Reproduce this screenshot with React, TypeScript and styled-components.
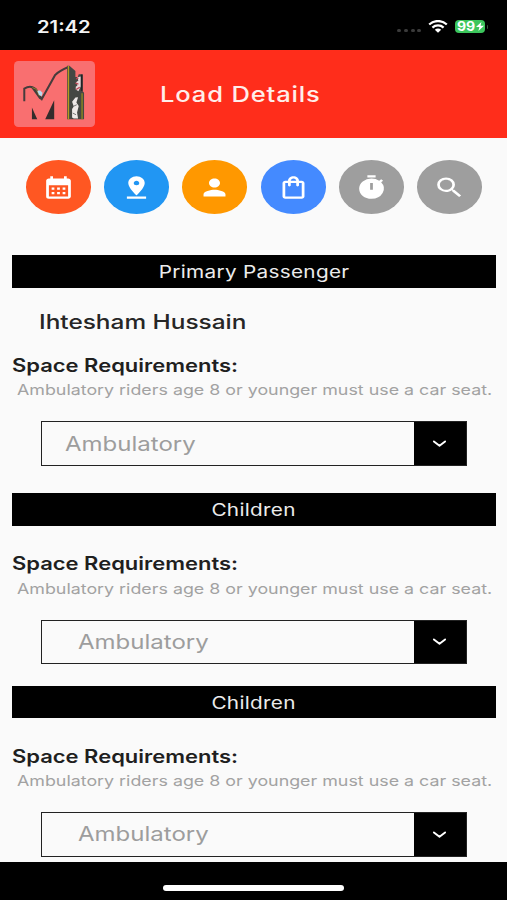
import React from 'react';
import styled, { createGlobalStyle } from 'styled-components';
import {
  MdCalendarMonth,
  MdPinDrop,
  MdPerson,
  MdOutlineShoppingBag,
  MdTimer,
  MdSearch,
} from 'react-icons/md';

const GlobalStyle = createGlobalStyle`
  * { box-sizing: border-box; }
  body { margin: 0; background: #000; font-family: Inter, "Liberation Sans", sans-serif; }
`;

const Screen = styled.div`
  width: 507px;
  height: 900px;
  display: flex;
  flex-direction: column;
  overflow: hidden;
  background: #fafafa;
`;

const Wide = styled.span<{ $scale?: number; $origin?: string }>`
  display: inline-block;
  white-space: nowrap;
  transform: scaleX(${(p) => p.$scale ?? 1.22});
  transform-origin: ${(p) => p.$origin ?? 'left'} center;
`;

const StatusBar = styled.div`
  flex: none;
  height: 50px;
  padding: 0 19px 0 37px;
  display: flex;
  justify-content: space-between;
  align-items: flex-start;
  background: #000;
  color: #f4f4f4;
`;

const Clock = styled.div`
  font-size: 17px;
  font-weight: 600;
  line-height: 22px;
  padding-top: 15.5px;
`;

const StatusIcons = styled.div`
  display: flex;
  align-items: center;
  height: 13px;
  margin-top: 20px;
`;

const Dots = styled.div`
  display: flex;
  gap: 2.6px;
  margin-right: 7px;
  padding-top: 8px;
`;

const Dot = styled.i`
  width: 4px;
  height: 3px;
  border-radius: 1.5px;
  background: #3b3b3b;
`;

const Battery = styled.div`
  width: 30px;
  height: 13.4px;
  margin-left: 7px;
  padding-left: 2px;
  border-radius: 4px;
  background: #3cc65c;
  color: #fff;
  display: flex;
  align-items: center;
  font-size: 12.5px;
  font-weight: 700;
  line-height: 13px;
`;

const BatteryValue = styled.span`
  width: 19px;
  padding-top: 0.4px;
`;

const Nub = styled.i`
  width: 1.5px;
  height: 4px;
  margin-left: 1.3px;
  border-radius: 0 2px 2px 0;
  background: #35553c;
`;

const Header = styled.header`
  flex: none;
  height: 88px;
  padding: 0 14px;
  display: grid;
  grid-template-columns: 81px 1fr 81px;
  align-items: center;
  background: #ff2d1b;
`;

const Logo = styled.svg`
  display: block;
  width: 81px;
  height: 66px;
`;

const Title = styled.h1`
  margin: 0;
  padding: 1px 0 0 65px;
  color: #ffeeea;
  font-size: 21px;
  font-weight: 500;
  line-height: 26px;
  letter-spacing: 0.7px;
`;

const Steps = styled.nav`
  flex: none;
  height: 117px;
  padding: 22.4px 25px 0 26px;
  display: flex;
  justify-content: space-between;
`;

const Step = styled.button<{ $color: string }>`
  width: 65px;
  height: 53.4px;
  padding: 0;
  border: 0;
  border-radius: 50%;
  display: grid;
  place-items: center;
  background: ${(p) => p.$color};
  color: #fff;

  svg {
    width: 27px;
    height: 27px;
    transform: scaleX(1.22);
  }
`;

const Section = styled.section<{ $gap: number }>`
  flex: none;
  padding: 0 11px 0 12px;
  margin-bottom: ${(p) => p.$gap}px;
`;

const Bar = styled.h2`
  height: 32.6px;
  margin: 0;
  padding-top: 1.5px;
  display: grid;
  place-items: center;
  background: #000;
  color: #ececec;
  font-size: 17px;
  font-weight: 400;
  letter-spacing: 0.24px;
`;

const Name = styled.div`
  margin-top: 21px;
  padding-left: 27px;
  height: 26px;
  color: #262626;
  font-size: 20px;
  font-weight: 500;
  line-height: 26px;
`;

const Label = styled.div<{ $top: number }>`
  margin-top: ${(p) => p.$top}px;
  height: 22px;
  color: #1f1f1f;
  font-size: 18px;
  font-weight: 600;
  line-height: 22px;
`;

const Hint = styled.div`
  margin-top: 3.2px;
  padding-left: 4.8px;
  height: 20px;
  color: #a2a2a2;
  font-size: 14.5px;
  line-height: 20px;
`;

const Select = styled.div<{ $indent: number }>`
  margin: 21.1px 29.5px 0 29px;
  height: 44.5px;
  display: flex;
  align-items: center;
  justify-content: space-between;
  padding-left: ${(p) => p.$indent}px;
  border: 1.4px solid #222;
  color: #9d9d9d;
  font-size: 20px;
  line-height: 26px;
`;

const Arrow = styled.span`
  align-self: stretch;
  width: 52px;
  display: grid;
  place-items: center;
  background: #000;
`;

const Main = styled.main`
  flex: none;
  height: 607.3px;
  overflow: hidden;
`;

const HomeBar = styled.footer`
  flex: 1;
  display: flex;
  justify-content: center;
  padding-top: 23px;
  background: #000;
`;

const HomeIndicator = styled.i`
  width: 181px;
  height: 6px;
  border-radius: 3px;
  background: #fff;
`;

const steps = [
  { color: '#ff5722', Icon: MdCalendarMonth },
  { color: '#2196f3', Icon: MdPinDrop },
  { color: '#ff9800', Icon: MdPerson },
  { color: '#448aff', Icon: MdOutlineShoppingBag },
  { color: '#9e9e9e', Icon: MdTimer },
  { color: '#9e9e9e', Icon: MdSearch },
];

const passengers = [
  { title: 'Primary Passenger', name: 'Ihtesham Hussain', labelTop: 20.6, indent: 22.5, gap: 27.1 },
  { title: 'Children', labelTop: 27.8, indent: 36, gap: 21.4 },
  { title: 'Children', labelTop: 27.6, indent: 36, gap: 0 },
];

function BrandLogo() {
  return (
    <Logo viewBox="13 14 244 199" preserveAspectRatio="none">
      <rect x="13" y="14" width="244" height="199" rx="13" fill="#f96f70" />
      <path
        d="M44 135V97Q62 86 76 97L97 128L137 56Q150 43 177 32"
        fill="none"
        stroke="#463c3c"
        strokeWidth="6"
      />
      <path d="M62 90L82 98L98 134L88 126Z" fill="#423e3b" />
      <path d="M68 94L80 99L90 120" fill="none" stroke="#9b8b29" strokeWidth="2.5" />
      <path d="M83 104L92 103L99 110L96 121L88 116Z" fill="#b9dcef" />
      <path d="M67 190V154L83 190Z" fill="#342c2c" />
      <path d="M107 190L134 132V190Z" fill="#342c2c" />
      <path d="M173 28L180 28L198 44V62H205L208 54H220V105L224 110V190H173Z" fill="#454744" />
      <path d="M177 29V190" stroke="#b39d1c" strokeWidth="4" />
      <path d="M218 111V190" stroke="#8f8b1f" strokeWidth="4" />
      <path
        d="M188 184V159L193 151L188 137L198 124L206 123L201 139L208 150L203 169L206 187H193Z"
        fill="#eee9e8"
      />
      <path
        d="M199 100V92L204 88L200 78L207 73L203 63L214 61V91L207 105Z"
        fill="#ead9dc"
      />
      <path d="M200 68L207 65M198 81L207 84M200 100L211 93" stroke="#bc4355" strokeWidth="4" />
      <path d="M217 55V104" stroke="#202326" strokeWidth="5" />
      <path d="M191 151L202 146M190 171L200 176" stroke="#777" strokeWidth="3" />
    </Logo>
  );
}

function Wifi() {
  return (
    <svg width="20" height="13" viewBox="0 0 20 13" fill="none">
      <path d="M1.2 4.5C6.1-.1 13.9-.1 18.8 4.5" stroke="#fff" strokeWidth="2.3" />
      <path d="M4.4 7.6C7.5 4.7 12.5 4.7 15.6 7.6" stroke="#fff" strokeWidth="2.2" />
      <path d="M6.8 9.8C8.6 8.2 11.4 8.2 13.2 9.8L10 12.8Z" fill="#fff" />
    </svg>
  );
}

function Chevron() {
  return (
    <svg width="15" height="9" viewBox="0 0 15 9" fill="none">
      <path
        d="M1.9 2.4L7.5 6.8L13.1 2.4"
        stroke="#fff"
        strokeWidth="1.9"
        strokeLinecap="round"
        strokeLinejoin="round"
      />
    </svg>
  );
}

export default function App() {
  return (
    <Screen>
      <GlobalStyle />
      <StatusBar>
        <Clock>
          <Wide $scale={1.19}>21:42</Wide>
        </Clock>
        <StatusIcons>
          <Dots>
            <Dot />
            <Dot />
            <Dot />
            <Dot />
          </Dots>
          <Wifi />
          <Battery>
            <BatteryValue>
              <Wide $scale={1.12}>99</Wide>
            </BatteryValue>
            <svg width="8" height="9" viewBox="0 0 8 9">
              <path d="M5.4 0L0 5.1H3.4L2.4 9L8 3.8H4.6Z" fill="#fff" />
            </svg>
          </Battery>
          <Nub />
        </StatusIcons>
      </StatusBar>
      <Header>
        <BrandLogo />
        <Title>
          <Wide $scale={1.215}>Load Details</Wide>
        </Title>
      </Header>
      <Steps>
        {steps.map(({ color, Icon }, i) => (
          <Step key={i} $color={color}>
            <Icon />
          </Step>
        ))}
      </Steps>
      <Main>
        {passengers.map((p, i) => (
          <Section key={i} $gap={p.gap}>
            <Bar>
              <Wide $origin="center">{p.title}</Wide>
            </Bar>
            {p.name && (
              <Name>
                <Wide>{p.name}</Wide>
              </Name>
            )}
            <Label $top={p.labelTop}>
              <Wide>Space Requirements:</Wide>
            </Label>
            <Hint>
              <Wide $scale={1.23}>Ambulatory riders age 8 or younger must use a car seat.</Wide>
            </Hint>
            <Select $indent={p.indent}>
              <Wide $scale={1.2}>Ambulatory</Wide>
              <Arrow>
                <Chevron />
              </Arrow>
            </Select>
          </Section>
        ))}
      </Main>
      <HomeBar>
        <HomeIndicator />
      </HomeBar>
    </Screen>
  );
}
